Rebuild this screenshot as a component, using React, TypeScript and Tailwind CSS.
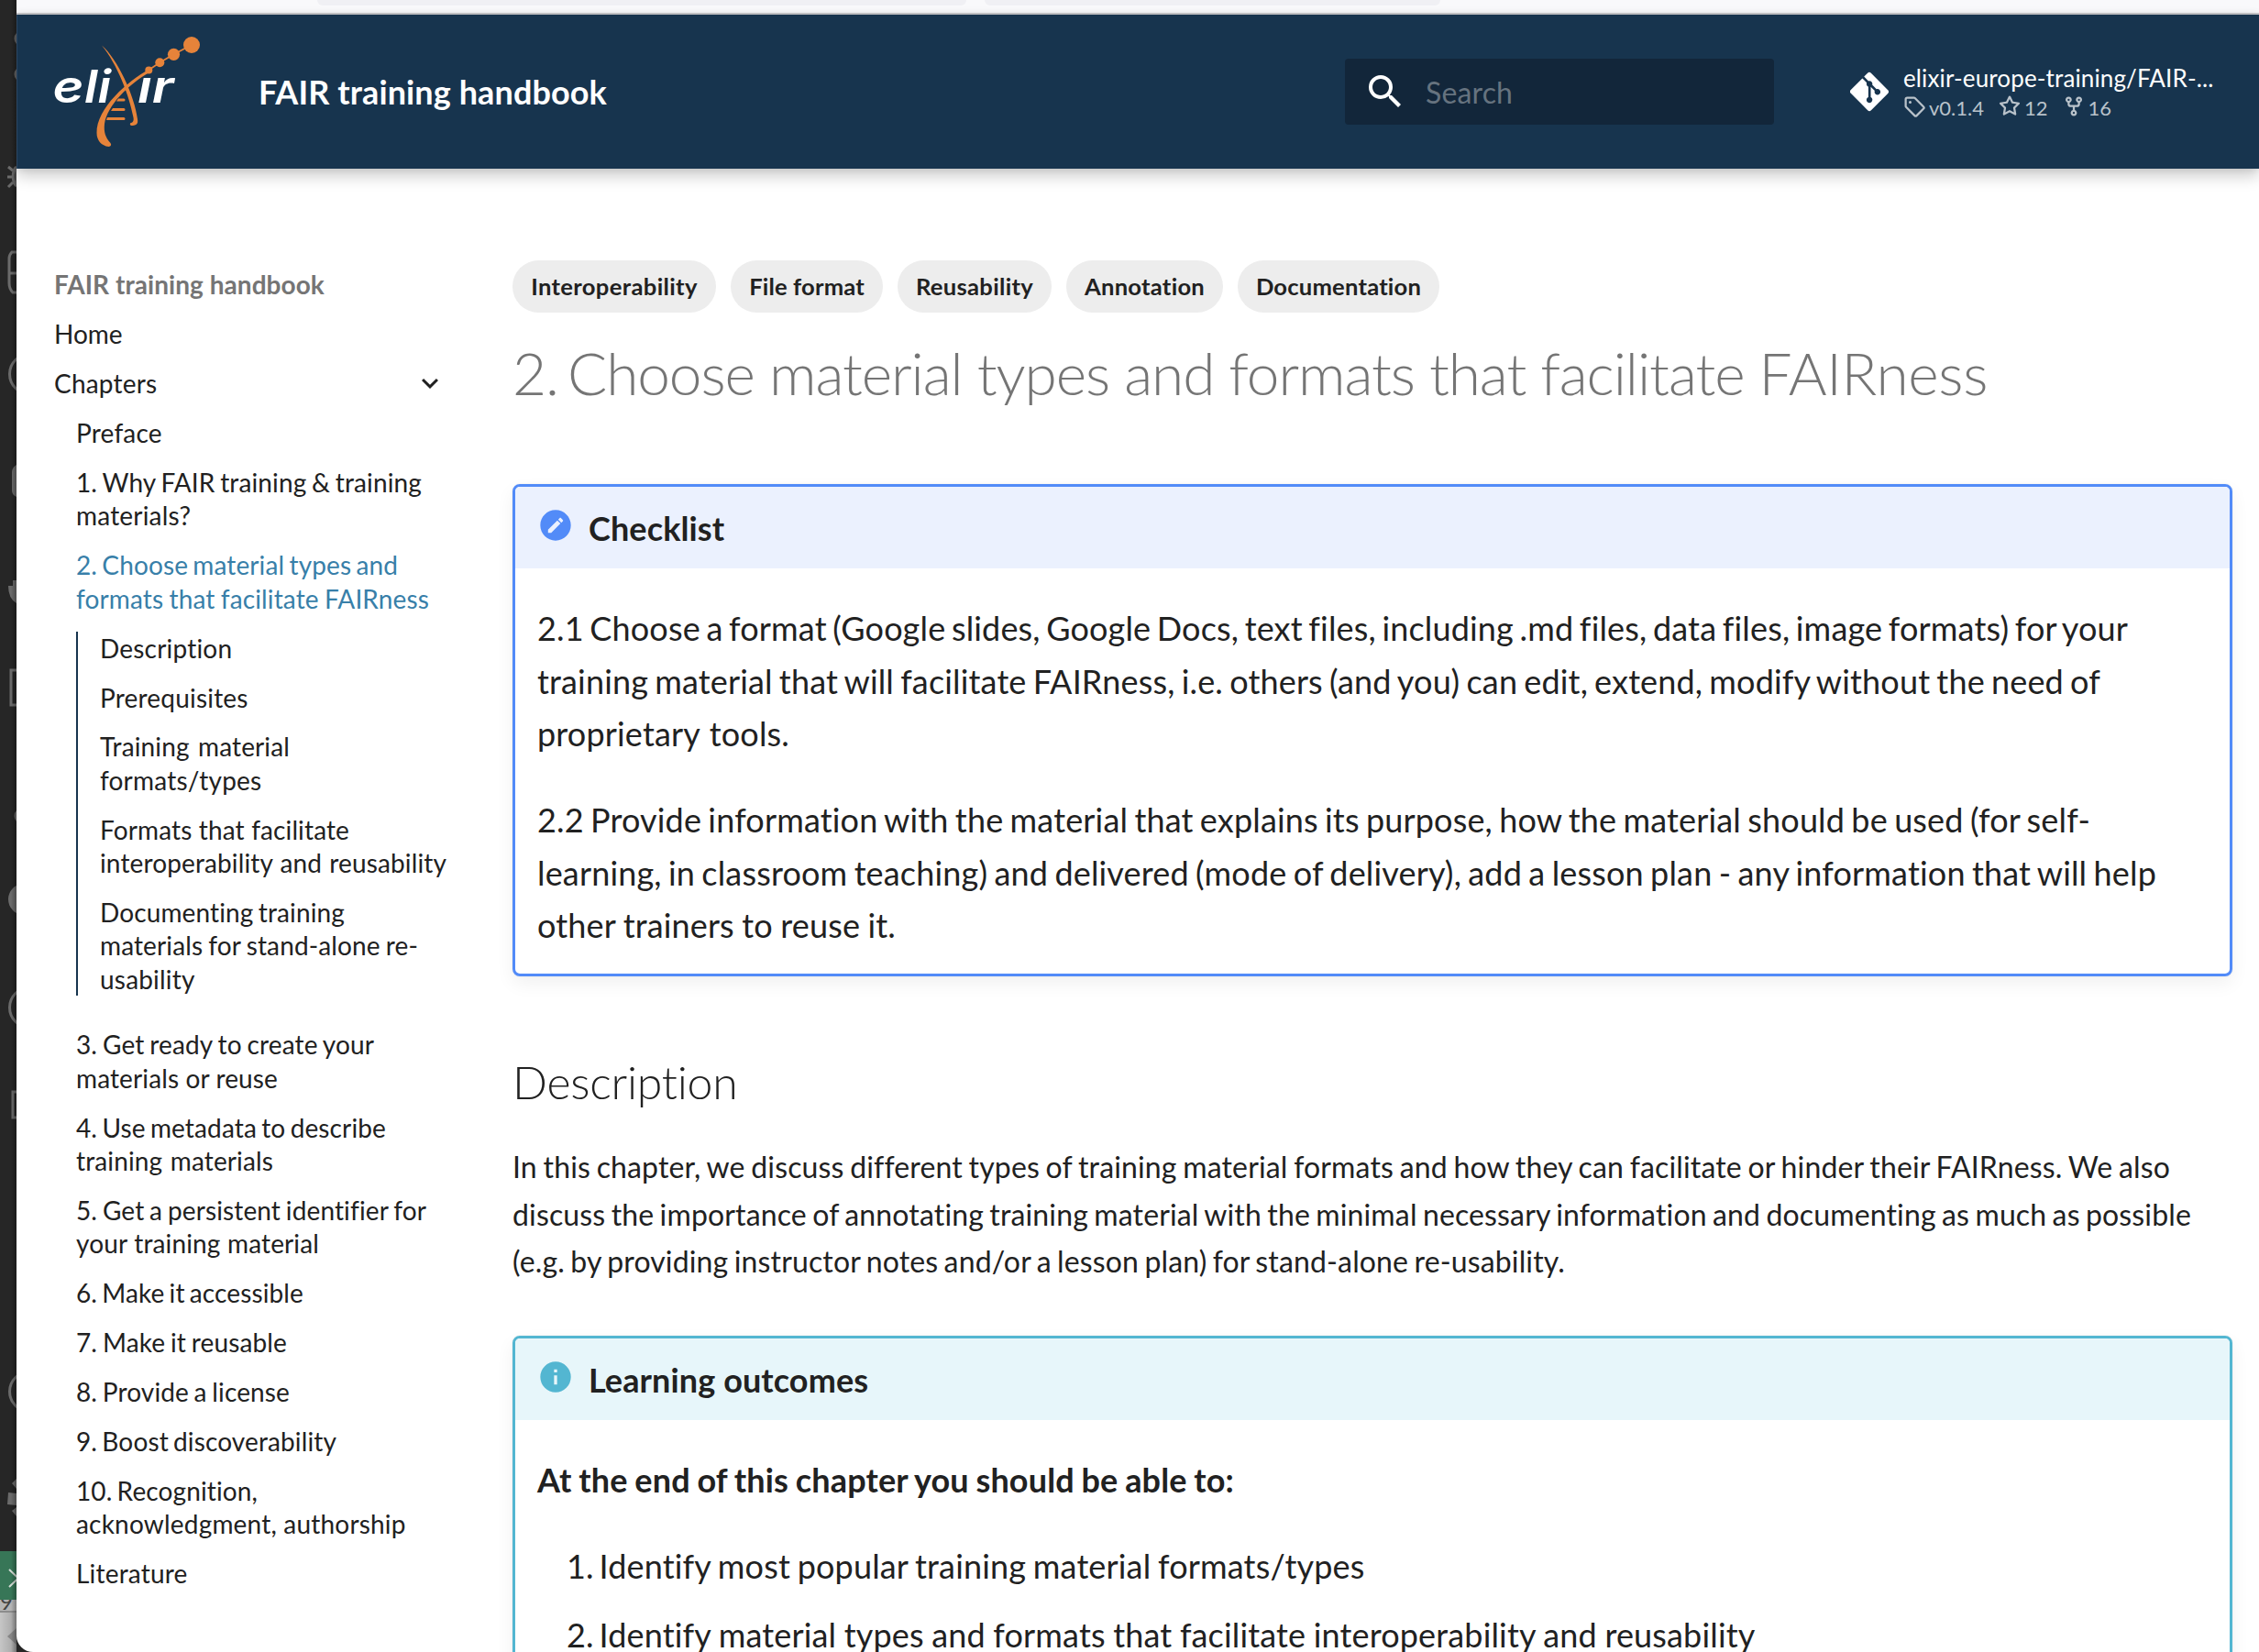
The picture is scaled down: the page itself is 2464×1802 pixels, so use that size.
import React from "react";
import { FaGitAlt } from "react-icons/fa";

type TextLine = [text: string, width?: number];

const chapterItems: { lines: TextLine[]; active?: boolean }[] = [
  { lines: [["Preface"]] },
  { lines: [["1. Why FAIR training & training", 377], ["materials?"]] },
  { lines: [["2. Choose material types and", 351], ["formats that facilitate FAIRness", 385]], active: true },
];

const sectionItems: TextLine[][] = [
  [["Description"]],
  [["Prerequisites"]],
  [["Training material", 207], ["formats/types"]],
  [["Formats that facilitate", 272], ["interoperability and reusability", 378]],
  [["Documenting training", 267], ["materials for stand-alone re-", 347], ["usability"]],
];

const laterItems: TextLine[][] = [
  [["3. Get ready to create your", 325], ["materials or reuse", 220]],
  [["4. Use metadata to describe", 338], ["training materials", 215]],
  [["5. Get a persistent identifier for", 382], ["your training material", 265]],
  [["6. Make it accessible", 248]],
  [["7. Make it reusable", 230]],
  [["8. Provide a license", 233]],
  [["9. Boost discoverability", 284]],
  [["10. Recognition,", 198], ["acknowledgment, authorship"]],
  [["Literature"]],
];

const tags: [string, string][] = [
  ["Interoperability", "w-[222px] tracking-[0.35px]"],
  ["File format", "w-[166px] tracking-[0.15px]"],
  ["Reusability", "w-[168px] tracking-[0.3px]"],
  ["Annotation", "w-[171px] tracking-[0.25px]"],
  ["Documentation", "w-[220px] tracking-[0.2px]"],
];

const TAG =
  "M2.5 7.775V2.75a.25.25 0 0 1 .25-.25h5.025a.25.25 0 0 1 .177.073l6.25 6.25a.25.25 0 0 1 0 .354l-5.025 5.025a.25.25 0 0 1-.354 0l-6.25-6.25a.25.25 0 0 1-.073-.177zm-1.5 0V2.75C1 1.784 1.784 1 2.75 1h5.025c.464 0 .91.184 1.238.513l6.25 6.25a1.75 1.75 0 0 1 0 2.474l-5.026 5.026a1.75 1.75 0 0 1-2.474 0l-6.25-6.25A1.75 1.75 0 0 1 1 7.775zM6 5a1 1 0 1 1-2 0 1 1 0 0 1 2 0z";
const STAR =
  "M8 .25a.75.75 0 0 1 .673.418l1.882 3.815 4.21.612a.75.75 0 0 1 .416 1.279l-3.046 2.97.719 4.192a.751.751 0 0 1-1.088.791L8 12.347l-3.766 1.98a.75.75 0 0 1-1.088-.79l.72-4.194L.818 6.374a.75.75 0 0 1 .416-1.28l4.21-.611L7.327.668A.75.75 0 0 1 8 .25Zm0 2.445L6.615 5.5a.75.75 0 0 1-.564.41l-3.097.45 2.24 2.184a.75.75 0 0 1 .216.664l-.528 3.084 2.769-1.456a.75.75 0 0 1 .698 0l2.77 1.456-.53-3.084a.75.75 0 0 1 .216-.664l2.24-2.183-3.096-.45a.75.75 0 0 1-.564-.41L8 2.694Z";
const FORK =
  "M5 5.372v.878c0 .414.336.75.75.75h4.5a.75.75 0 0 0 .75-.75v-.878a2.25 2.25 0 1 1 1.5 0v.878a2.25 2.25 0 0 1-2.25 2.25h-1.5v2.128a2.251 2.251 0 1 1-1.5 0V8.5h-1.5A2.25 2.25 0 0 1 3.5 6.25v-.878a2.25 2.25 0 1 1 1.5 0ZM5 3.25a.75.75 0 1 0-1.5 0 .75.75 0 0 0 1.5 0Zm6.75.75a.75.75 0 1 0 0-1.5.75.75 0 0 0 0 1.5Zm-3 8.75a.75.75 0 1 0-1.5 0 .75.75 0 0 0 1.5 0Z";

function Lines({ lines }: { lines: TextLine[] }) {
  return (
    <>
      {lines.map(([text, width]) =>
        width ? (
          <span
            key={text}
            className="block text-justify tracking-[0.0045em] [text-align-last:justify] [word-spacing:-0.13em]"
            style={{ width }}
          >
            {text}
          </span>
        ) : (
          <span key={text} className="block tracking-[0.007em]">
            {text}
          </span>
        ),
      )}
    </>
  );
}

function Fact({ path, label }: { path: string; label: string }) {
  return (
    <li className="flex items-start">
      <svg viewBox="0 0 16 16" className="mr-1 size-6 shrink-0 fill-current">
        <path d={path} fillRule="evenodd" />
      </svg>
      <span className="pt-px leading-[26px]">{label}</span>
    </li>
  );
}

function Logo() {
  return (
    <svg viewBox="50 30 180 140" className="h-[140px] w-[180px] shrink-0">
      <g fill="#fff" fontFamily="Inter" fontStyle="italic" fontWeight="600" fontSize="49">
        <text x="57.5" y="112" textLength="34" lengthAdjust="spacingAndGlyphs">e</text>
        <text x="92" y="112" textLength="29" lengthAdjust="spacingAndGlyphs">li</text>
        <text x="150" y="112" textLength="39.5" lengthAdjust="spacingAndGlyphs">ır</text>
      </g>
      <g fill="#e6833a">
        <path d="M111 49.500C128 64 147 105 150 130c1 6-2 7-7 7-2-1-1-3 0-3 4-1 2.500-6 2-8C141 105 128 70 111 49.500Z" />
        <path d="M162 76C140 88 105 118 105.500 145c0 8 5 14 13 15q4-1 2-4C115 150 113 144 114 135 117 115 140 92 163 79Z" />
        <path d="M129 107.500h6a1.500 1.500 0 0 1 0 3h-8zM123 118h12a1.500 1.500 0 0 1 0 3h-14zM117 128h18a1.500 1.500 0 0 1 0 3h-19z" />
        <circle cx="162.300" cy="76.500" r="4" />
        <circle cx="174.300" cy="68.300" r="5" />
        <circle cx="189.500" cy="59.300" r="6.600" />
        <circle cx="209" cy="49" r="9" />
      </g>
      <path d="M162 76.500 174.300 68.300 189.500 59.300 209 49" fill="none" stroke="#e6833a" strokeWidth="1.800" />
    </svg>
  );
}

function ActivityStrip() {
  return (
    <aside className="relative w-[18px] shrink-0 bg-[#262626]">
      <svg viewBox="0 0 18 1802" className="h-[1802px] w-[18px]" fill="none" stroke="#6b6b6b" strokeWidth="3">
        <circle cx="24" cy="42" r="7" />
        <circle cx="24" cy="81" r="7" />
        <path d="M18 182c-5 4-5 17 0 21M9 182l5 4M8 193h6M9 204l5-5M18 184v18" />
        <path d="M20 275h-7q-3 3-3 7v27q0 6 4 10h6M11 298h9" />
        <circle cx="32" cy="408" r="21.500" />
        <path d="M18 507q-5 3-5 8v20q0 5 5 7z" fill="#6b6b6b" stroke="none" />
        <path d="M14 633h4v25q-9-5-9-19h5z" fill="#6b6b6b" stroke="none" />
        <path d="M20 731h-8v38h8" />
        <circle cx="24" cy="890" r="7" />
        <circle cx="26" cy="981" r="17" fill="#6b6b6b" stroke="none" />
        <circle cx="32" cy="1099" r="21.500" />
        <path d="M20 1191h-6v28h6" />
        <circle cx="32" cy="1518" r="21.500" />
        <path d="M13 1618 18 1613v11zM9 1628l9 1v13l-10-1zM13 1648l5-4v10z" fill="#6b6b6b" stroke="none" />
      </svg>
      <div className="absolute inset-x-0 top-[1745px] h-[57px] bg-linear-to-r from-[#c6c6c6] to-[#a2a2a2]">
        <div className="h-[14px] border-b-2 border-[#8c8c8c] bg-[#b5b5b5] font-[Lato] text-[24px] leading-[3px] text-[#444]">
          9
        </div>
        <svg viewBox="0 0 18 43" className="h-[43px] w-[18px]">
          <path d="M8 26 18 17v18z" fill="#858585" />
        </svg>
      </div>
      <div className="absolute inset-x-0 top-[1692px] h-[53px] bg-[#377657]">
        <svg viewBox="0 0 18 53" className="h-[53px] w-[18px]" fill="none" stroke="#d5ddd6" strokeWidth="2">
          <path d="m10 20 10 9.500L10 39" />
        </svg>
      </div>
      <div className="absolute inset-y-0 right-0 w-1.5 bg-linear-to-r from-transparent to-black/30" />
    </aside>
  );
}

function Callout({
  tone,
  title,
  children,
}: {
  tone: "checklist" | "info";
  title: string;
  children: React.ReactNode;
}) {
  const checklist = tone === "checklist";
  return (
    <section
      className={
        "rounded-lg border-3 pb-[23.6px] text-[36px] leading-[57.6px] shadow-[0_8px_20px_rgba(0,0,0,0.06),0_0_2px_rgba(0,0,0,0.1)] " +
        (checklist ? "border-[#528bf8]" : "border-[#53b6d1]")
      }
    >
      <div
        className={
          "flex items-start rounded-t-[5px] pt-[17px] pb-[14px] pl-6 font-bold " +
          (checklist ? "bg-[#ebf1fe]" : "bg-[#e7f6fa]")
        }
      >
        <svg
          viewBox="0 0 24 24"
          className={"mt-[5px] mr-4 size-10 " + (checklist ? "fill-[#528bf8]" : "fill-[#53b6d1]")}
        >
          {checklist ? (
            <path d="M12 2C6.470 2 2 6.470 2 12s4.470 10 10 10 10-4.470 10-10S17.530 2 12 2m3.100 5.070c.140 0 .280.050.400.160l1.270 1.270c.230.220.230.570 0 .780l-1 1-2.050-2.050 1-1c.100-.110.240-.160.380-.160m-1.970 1.740 2.060 2.060-6.060 6.060H7.070v-2.060z" />
          ) : (
            <path d="M13 9h-2V7h2m0 10h-2v-6h2m-1-9A10 10 0 0 0 2 12a10 10 0 0 0 10 10 10 10 0 0 0 10-10A10 10 0 0 0 12 2" />
          )}
        </svg>
        <span className="tracking-[0.003em]">{title}</span>
      </div>
      <div className="mt-[37.4px] flex flex-col gap-9 px-6">{children}</div>
    </section>
  );
}

export default function App() {
  return (
    <div className="flex h-[1802px] w-[2464px] overflow-hidden bg-[#262626] font-[Lato,sans-serif] text-[#212121] [font-variant-ligatures:no-common-ligatures]">
      <ActivityStrip />
      <div className="relative flex h-[1802px] w-[2446px] flex-col overflow-hidden rounded-bl-[18px] bg-white">
        <div className="flex h-4 shrink-0 items-start border-b-2 border-[#cccccf] bg-[#f9f9fb] pl-[328px]">
          <div className="h-1.5 w-[708px] rounded-b-md bg-[#f0f0f4]" />
          <div className="ml-5 h-1.5 w-[497px] rounded-b-md bg-[#f0f0f4]" />
        </div>
        <header className="z-10 flex h-[168px] shrink-0 items-center border-l border-[#2c4763] bg-[#17344e] text-white shadow-[0_0_8px_rgba(0,0,0,0.1),0_8px_16px_rgba(0,0,0,0.2)]">
          <div className="flex w-[263px] shrink-0 pl-[31px]">
            <Logo />
          </div>
          <div className="w-[1185px] shrink-0 text-[36px] leading-[44px] font-bold tracking-[0.1px]">
            FAIR training handbook
          </div>
          <div className="flex h-[72px] w-[468px] shrink-0 items-center rounded-sm bg-[#12263a] pl-5">
            <svg viewBox="0 0 24 24" className="size-12 fill-white">
              <path d="M9.500 3A6.500 6.500 0 0 1 16 9.500c0 1.610-.590 3.090-1.560 4.230l.270.270h.790l5 5-1.500 1.500-5-5v-.790l-.270-.270A6.520 6.520 0 0 1 9.500 16 6.500 6.500 0 0 1 3 9.500 6.500 6.500 0 0 1 9.500 3m0 2C7 5 5 7 5 9.500S7 14 9.500 14 14 12 14 9.500 12 5 9.500 5" />
            </svg>
            <span className="ml-5 pt-0.5 text-[32px] leading-10 tracking-[0.15px] text-[#66737f]">Search</span>
          </div>
          <a className="ml-[83px] flex items-center">
            <FaGitAlt size={48} className="w-[42px]" />
            <div className="ml-4 w-[350px]">
              <div className="-mt-0.5 text-[26px] leading-[34px] tracking-[0.13px]">elixir-europe-training/FAIR-...</div>
              <ul className="mt-0.5 flex gap-4 text-[22px] text-[#b9c2ca]">
                <Fact path={TAG} label="v0.1.4" />
                <Fact path={STAR} label="12" />
                <Fact path={FORK} label="16" />
              </ul>
            </div>
          </a>
        </header>

        <div className="flex">
          <nav className="w-[541px] shrink-0 pt-[108.4px] pl-[41px] text-[28px] leading-[36.4px]">
            <div className="font-bold tracking-[0.05px] text-[#757575]">FAIR training handbook</div>
            <div className="mt-[17.5px]">Home</div>
            <div className="mt-[17.5px] flex w-[428px] items-center justify-between">
              <span className="tracking-[0.007em]">Chapters</span>
              <svg viewBox="0 0 24 24" className="size-9 rotate-90 fill-[#212121]">
                <path d="M8.590 16.580 13.170 12 8.590 7.410 10 6l6 6-6 6z" />
              </svg>
            </div>
            <ul className="mt-[17.5px] flex flex-col gap-[17.5px] pl-6">
              {chapterItems.map(({ lines, active }) => (
                <li key={lines[0][0]} className={active ? "text-[#387fa9]" : ""}>
                  <Lines lines={lines} />
                </li>
              ))}
              <li className="mb-[17.5px]">
                <ul className="flex flex-col gap-[17.5px] border-l-2 border-[#17344e] pl-6">
                  {sectionItems.map((lines) => (
                    <li key={lines[0][0]}>
                      <Lines lines={lines} />
                    </li>
                  ))}
                </ul>
              </li>
              {laterItems.map((lines) => (
                <li key={lines[0][0]}>
                  <Lines lines={lines} />
                </li>
              ))}
            </ul>
          </nav>

          <main className="w-[1876px] shrink-0 pt-[100px]">
            <div className="flex gap-4">
              {tags.map(([tag, fit]) => (
                <span
                  key={tag}
                  className={"rounded-full bg-[#ededed] py-2 text-center text-[25.6px] leading-[41px] font-bold " + fit}
                >
                  {tag}
                </span>
              ))}
            </div>
            <h1 className="mt-6 mb-20 w-[1609px] text-justify text-[64px] leading-[83.2px] font-light tracking-[-0.017em] text-[#757575] [text-align-last:justify] [word-spacing:-0.12em]">
              <span className="-mr-1.5">2.</span> Choose material types and formats that facilitate{" "}
              <span className="tracking-[-0.006em]">FAIRness</span>
            </h1>
            <Callout tone="checklist" title="Checklist">
              <p>
                <Lines
                  lines={[
                    [
                      "2.1 Choose a format (Google slides, Google Docs, text files, including .md files, data files, image formats) for your",
                      1735,
                    ],
                    [
                      "training material that will facilitate FAIRness, i.e. others (and you) can edit, extend, modify without the need of",
                      1705,
                    ],
                    ["proprietary tools.", 275],
                  ]}
                />
              </p>
              <p>
                <Lines
                  lines={[
                    [
                      "2.2 Provide information with the material that explains its purpose, how the material should be used (for self-",
                      1694,
                    ],
                    [
                      "learning, in classroom teaching) and delivered (mode of delivery), add a lesson plan - any information that will help",
                      1766,
                    ],
                    ["other trainers to reuse it.", 391],
                  ]}
                />
              </p>
            </Callout>
            <h2 className="mt-20 text-[50px] leading-[70px] font-light tracking-[-0.005em]">Description</h2>
            <p className="mt-8 mb-14 text-[32px] leading-[51.2px]">
              <Lines
                lines={[
                  [
                    "In this chapter, we discuss different types of training material formats and how they can facilitate or hinder their FAIRness. We also",
                    1808,
                  ],
                  [
                    "discuss the importance of annotating training material with the minimal necessary information and documenting as much as possible",
                    1831,
                  ],
                  ["(e.g. by providing instructor notes and/or a lesson plan) for stand-alone re-usability.", 1148],
                ]}
              />
            </p>
            <Callout tone="info" title="Learning outcomes">
              <p className="font-bold">
                <Lines lines={[["At the end of this chapter you should be able to:", 760]]} />
              </p>
              <ol className="flex flex-col gap-[18px]">
                <li className="flex">
                  <span className="w-[67.5px] pr-1.5 text-right">1.</span>
                  <span>
                    <Lines lines={[["Identify most popular training material formats/types", 835]]} />
                  </span>
                </li>
                <li className="flex">
                  <span className="w-[67.5px] pr-1.5 text-right">2.</span>
                  <span>
                    <Lines
                      lines={[["Identify material types and formats that facilitate interoperability and reusability", 1261]]}
                    />
                  </span>
                </li>
              </ol>
            </Callout>
          </main>
        </div>
      </div>
    </div>
  );
}
